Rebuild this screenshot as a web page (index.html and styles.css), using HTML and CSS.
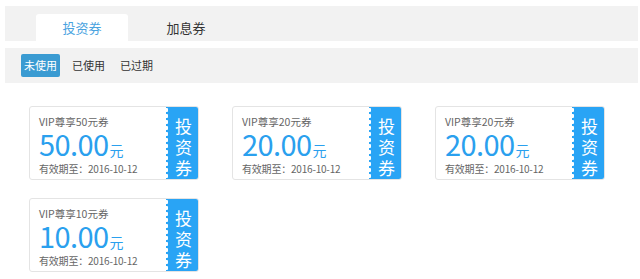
FILE: index.html
```html
<!DOCTYPE html>
<html lang="zh-CN">
<head>
    <meta charset="UTF-8">
    <title>我的优惠券</title>
    <link rel="stylesheet" href="styles.css">
</head>
<body>
    <div class="page">
        <!-- 券种切换 -->
        <div class="tab-bar">
            <div class="tab active">投资券</div>
            <div class="tab">加息券</div>
        </div>

        <!-- 状态筛选 -->
        <div class="filter-bar">
            <span class="filter active">未使用</span>
            <span class="filter">已使用</span>
            <span class="filter">已过期</span>
        </div>

        <!-- 券列表 -->
        <div class="coupon-list">
            <div class="coupon">
                <div class="coupon-info">
                    <div class="coupon-title">VIP尊享50元券</div>
                    <div class="coupon-amount">50.00<span class="unit">元</span></div>
                    <div class="coupon-date">有效期至：2016-10-12</div>
                </div>
                <div class="coupon-side">投<br>资<br>券</div>
            </div>
            <div class="coupon">
                <div class="coupon-info">
                    <div class="coupon-title">VIP尊享20元券</div>
                    <div class="coupon-amount">20.00<span class="unit">元</span></div>
                    <div class="coupon-date">有效期至：2016-10-12</div>
                </div>
                <div class="coupon-side">投<br>资<br>券</div>
            </div>
            <div class="coupon">
                <div class="coupon-info">
                    <div class="coupon-title">VIP尊享20元券</div>
                    <div class="coupon-amount">20.00<span class="unit">元</span></div>
                    <div class="coupon-date">有效期至：2016-10-12</div>
                </div>
                <div class="coupon-side">投<br>资<br>券</div>
            </div>
            <div class="coupon">
                <div class="coupon-info">
                    <div class="coupon-title">VIP尊享10元券</div>
                    <div class="coupon-amount">10.00<span class="unit">元</span></div>
                    <div class="coupon-date">有效期至：2016-10-12</div>
                </div>
                <div class="coupon-side">投<br>资<br>券</div>
            </div>
        </div>
    </div>
</body>
</html>
```

FILE: styles.css
```css
body {
    margin: 0;
    background-color: #ffffff;
    font-family: "Noto Sans CJK SC", "Noto Sans", sans-serif;
    color: #333;
}
.page {
    padding: 6px 2px 0 5px;
}
.tab-bar {
    display: flex;
    align-items: flex-end;
    height: 35px;
    background-color: #f2f2f2;
    padding-left: 31px;
}
.tab {
    width: 92px;
    height: 27px;
    line-height: 27px;
    text-align: center;
    font-size: 13px;
    color: #333;
    border-radius: 3px 3px 0 0;
}
.tab.active {
    background-color: #ffffff;
    color: #4aa3df;
    margin-right: 12px;
}
.filter-bar {
    display: flex;
    align-items: center;
    gap: 5px;
    height: 35px;
    margin-top: 7px;
    background-color: #f2f2f2;
    padding-left: 16px;
}
.filter {
    padding: 0 5px;
    height: 23px;
    line-height: 23px;
    font-size: 11px;
    color: #333;
    border-radius: 2px;
}
.filter.active {
    background-color: #3a9bd2;
    color: #ffffff;
    padding: 0 3px;
    margin-right: 2px;
}
.coupon-list {
    display: flex;
    flex-wrap: wrap;
    column-gap: 33px;
    row-gap: 18px;
    padding: 23px 0 0 24px;
}
.coupon {
    display: flex;
    width: 170px;
    height: 74px;
    box-sizing: border-box;
    border: 1px solid #e4e4e4;
    border-radius: 3px;
    overflow: hidden;
}
.coupon-info {
    flex: 1;
    padding: 9px 0 0 9px;
}
.coupon-title {
    font-size: 10.5px;
    color: #666;
    line-height: 12px;
    height: 12px;
}
.coupon-amount {
    font-size: 29px;
    line-height: 30px;
    height: 30px;
    color: #2aa0ee;
    letter-spacing: -0.6px;
}
.coupon-amount .unit {
    font-size: 14px;
    line-height: 1;
    margin-left: 1px;
}
.coupon-date {
    margin-top: 5px;
    font-size: 10px;
    color: #666;
    line-height: 12px;
    letter-spacing: -0.2px;
}
.coupon-side {
    width: 32px;
    background-color: #29a4f5;
    background-image: radial-gradient(circle at 0 3px, #ffffff 2px, transparent 2.5px);
    background-size: 5px 6px;
    background-repeat: repeat-y;
    color: #ffffff;
    font-size: 17px;
    line-height: 21px;
    text-align: center;
    padding: 8px 0 0 3px;
    box-sizing: border-box;
}
```
